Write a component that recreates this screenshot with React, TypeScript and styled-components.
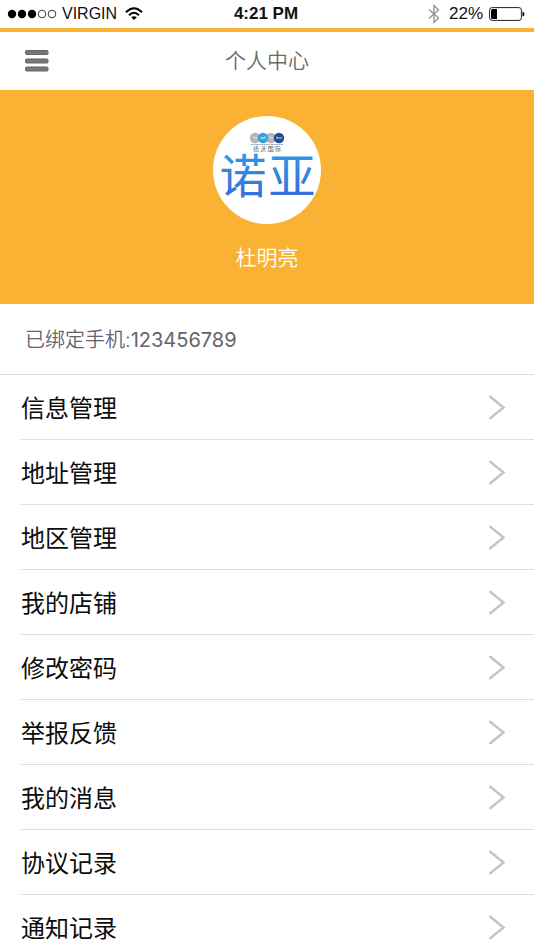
import React from "react";
import styled, { createGlobalStyle } from "styled-components";

const cjk = '"Noto Sans CJK SC", sans-serif';

const GlobalStyle = createGlobalStyle`
  *, *::before, *::after { box-sizing: border-box; }
  html { scrollbar-width: none; }
  body {
    margin: 0;
    background: #fff;
    color: #0c0c0c;
    font-family: "Liberation Sans", ${cjk};
  }
`;

const Screen = styled.div`
  display: flex;
  flex-direction: column;
  min-height: 100vh;
  background: #fff;
`;

const StatusBar = styled.div`
  display: grid;
  grid-template-columns: 1fr auto 1fr;
  align-items: center;
  height: 28px;
  padding: 0 9px 0 7px;
  font-size: 17px;
  line-height: 28px;
  color: #111;
`;

const StatusGroup = styled.div<{ $end?: boolean }>`
  display: flex;
  align-items: center;
  justify-content: ${(p) => (p.$end ? "flex-end" : "flex-start")};
  gap: ${(p) => (p.$end ? "6px" : "5px")};
`;

const Carrier = styled.span`
  font-size: 16px;
`;

const Clock = styled.time`
  font-weight: 700;
  font-size: 17px;
`;

const NavBar = styled.header`
  display: grid;
  grid-template-columns: 48px 1fr 48px;
  align-items: center;
  height: 62px;
  padding: 0 13px;
  border-top: 4px solid #f9b233;
`;

const MenuButton = styled.button`
  display: grid;
  place-items: center;
  width: 48px;
  height: 48px;
  padding: 0;
  border: 0;
  background: none;
  cursor: pointer;
`;

const Title = styled.h1`
  margin: 0;
  padding-bottom: 4px;
  text-align: center;
  font: 350 21px/32px ${cjk};
  color: #6a6a6a;
`;

const Profile = styled.section`
  display: flex;
  flex-direction: column;
  align-items: center;
  gap: 16px;
  height: 214px;
  padding-top: 26px;
  background: #f9b233;
`;

const Avatar = styled.svg`
  display: block;
  width: 108px;
  height: 108px;
`;

const UserName = styled.p`
  margin: 0;
  font: 350 21px/32px ${cjk};
  color: #fff;
`;

const Phone = styled.p`
  margin: 0;
  height: 71px;
  padding: 0 25px;
  border-bottom: 1px solid #dedede;
  font: 350 20px/72px Inter, ${cjk};
  color: #63646d;
`;

const PhoneNumber = styled.span`
  font-weight: 400;
`;

const Menu = styled.ul`
  margin: 0;
  padding: 0 0 0 21px;
  list-style: none;
`;

const MenuItem = styled.li`
  border-bottom: 1px solid #dedede;
`;

const MenuLink = styled.a`
  display: flex;
  align-items: center;
  justify-content: space-between;
  height: 64px;
  padding-right: 28px;
  font: 400 24px/64px ${cjk};
  color: #0c0c0c;
  text-decoration: none;
`;

const items = [
  "信息管理",
  "地址管理",
  "地区管理",
  "我的店铺",
  "修改密码",
  "举报反馈",
  "我的消息",
  "协议记录",
  "通知记录",
];

const Signal = () => (
  <svg width="50" height="10" viewBox="0 0 50 10" aria-label="信号">
    {[0, 1, 2, 3, 4].map((i) => (
      <circle
        key={i}
        cx={5 + i * 10}
        cy="5"
        r={i < 3 ? 4.2 : 3.8}
        fill={i < 3 ? "#000" : "none"}
        stroke={i < 3 ? "none" : "#222"}
        strokeWidth="0.9"
      />
    ))}
  </svg>
);

const Wifi = () => (
  <svg width="22" height="14" viewBox="-3 0 22 14" fill="none" stroke="#000" strokeWidth="2" aria-label="Wi-Fi">
    <path d="M1 5.2Q9-2.6 17 5.2" />
    <path d="M4 8.2Q9 3.4 14 8.2" />
    <path d="M9 13L6.2 10.3Q9 8 11.8 10.3Z" fill="#000" stroke="none" />
  </svg>
);

const Bluetooth = () => (
  <svg width="15" height="20" viewBox="0 0 15 20" fill="none" stroke="#929292" strokeWidth="1.3" aria-label="蓝牙">
    <path d="M1 5.5L10.5 14 6 18.5V1.5L10.5 6 1 14.5" />
  </svg>
);

const Battery = () => (
  <svg width="36" height="14" viewBox="0 0 36 14" aria-label="电量">
    <rect x="0.6" y="0.6" width="31.8" height="12.8" rx="2.5" fill="#fff" stroke="#222" />
    <path d="M2 3.5Q2 2 3.5 2H8V12H3.5Q2 12 2 10.5Z" />
    <path d="M33.5 4.5Q35.5 5 35.5 7T33.5 9.5Z" />
  </svg>
);

const MenuIcon = () => (
  <svg width="24" height="22" viewBox="0 0 24 22" fill="#777" stroke="#666" aria-hidden="true">
    <rect x="0.5" y="0.5" width="22.5" height="4" rx="1" />
    <rect x="0.5" y="9" width="22.5" height="4" rx="1" />
    <rect x="0.5" y="17" width="22.5" height="4" rx="1" />
  </svg>
);

const Chevron = () => (
  <svg width="18" height="26" viewBox="0 0 18 26" fill="none" stroke="#c4c4c7" strokeWidth="2.4" strokeLinecap="round" aria-hidden="true">
    <path d="M2.2 2.8L15.6 13.5 2.2 24.2" />
  </svg>
);

const badges = [
  { x: 42, label: "De", fill: "#b3b4bd" },
  { x: 58, label: "Da", fill: "#b3b4bd" },
  { x: 50, label: "well", fill: "#36a2d8" },
  { x: 66, label: "best", fill: "#204c94" },
];

const Logo = () => (
  <Avatar viewBox="0 0 108 108" role="img" aria-label="诺亚">
    <defs>
      <linearGradient id="noah" x1="0" y1="0" x2="0" y2="1">
        <stop offset="0.2" stopColor="#2b9be5" />
        <stop offset="1" stopColor="#3a62dc" />
      </linearGradient>
    </defs>
    <circle cx="54" cy="54" r="54" fill="#fff" />
    {badges.map((b) => (
      <g key={b.label}>
        <circle cx={b.x} cy="22" r="5.2" fill={b.fill} />
        <text x={b.x} y="23" textAnchor="middle" fontSize="3" fontFamily="Liberation Sans, sans-serif" fill="#fff">
          {b.label}
        </text>
      </g>
    ))}
    <path d="M38 28.5H70" stroke="#6992bf" strokeWidth="0.8" strokeDasharray="2 0.5" />
    <text x="54" y="35" textAnchor="middle" fontSize="6" fontFamily="Noto Sans CJK SC, sans-serif" fill="#555">
      德 沃 国 际
    </text>
    <g textAnchor="middle" fontSize="47" fontFamily="Noto Sans CJK SC, sans-serif" fill="url(#noah)">
      <text x="30" y="77">诺</text>
      <text x="79" y="77">亚</text>
    </g>
  </Avatar>
);

export default function App() {
  return (
    <>
      <GlobalStyle />
      <Screen>
        <StatusBar>
          <StatusGroup>
            <Signal />
            <Carrier>VIRGIN</Carrier>
            <Wifi />
          </StatusGroup>
          <Clock>4:21 PM</Clock>
          <StatusGroup $end>
            <Bluetooth />
            <span>22%</span>
            <Battery />
          </StatusGroup>
        </StatusBar>
        <NavBar>
          <MenuButton type="button" aria-label="菜单">
            <MenuIcon />
          </MenuButton>
          <Title>个人中心</Title>
        </NavBar>
        <main>
          <Profile>
            <Logo />
            <UserName>杜明亮</UserName>
          </Profile>
          <Phone>
            已绑定手机:<PhoneNumber>123456789</PhoneNumber>
          </Phone>
          <nav>
            <Menu>
              {items.map((item) => (
                <MenuItem key={item}>
                  <MenuLink href="#">
                    {item}
                    <Chevron />
                  </MenuLink>
                </MenuItem>
              ))}
            </Menu>
          </nav>
        </main>
      </Screen>
    </>
  );
}
